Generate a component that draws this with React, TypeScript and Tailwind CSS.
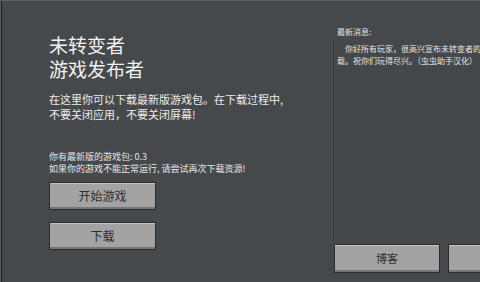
const font = { fontFamily: '"Noto Sans CJK SC", "Noto Sans", sans-serif' };

const GameButton = ({ label, className = "" }: { label: string; className?: string }) => (
  <button
    className={`flex items-center justify-center shrink-0 border border-[#2a2d2f] bg-[#a3a3a3] text-[#2e2e2e] shadow-[inset_0_1px_0_#c4c4c4,inset_0_-2px_0_#777] ${className}`}
  >
    {label}
  </button>
);

const App = () => {
  return (
    <div
      className="relative flex w-[480px] h-[282px] overflow-hidden bg-[#46494b] border-t border-[#5c6062]"
      style={font}
    >
      {/* dark left edge */}
      <div className="w-[1px] bg-[#5a5d5f] shrink-0" />
      <div className="w-[1px] bg-[#1c1e1f] shrink-0" />

      {/* Left column */}
      <div className="flex flex-col w-[331px] shrink-0 pl-[47px] pt-[32px]">
        <h1 className="text-[19px] leading-[24px] text-[#f2f2f2] font-normal">
          未转变者
          <br />
          游戏发布者
        </h1>
        <p className="mt-[11px] text-[11px] leading-[15px] text-[#ececec] whitespace-nowrap">
          在这里你可以下载最新版游戏包。在下载过程中,
          <br />
          不要关闭应用，不要关闭屏幕!
        </p>
        <p className="mt-[29px] text-[9px] leading-[12px] text-[#e6e6e6] whitespace-nowrap">
          你有最新版的游戏包: 0.3
          <br />
          如果你的游戏不能正常运行, 请尝试再次下载资源!
        </p>
        <div className="mt-[7px] flex flex-col gap-[12px]">
          <GameButton label="开始游戏" className="w-[107px] h-[28px] text-[12px]" />
          <GameButton label="下载" className="w-[107px] h-[28px] text-[12px]" />
        </div>
      </div>

      {/* Right column */}
      <div className="flex flex-col flex-1 pt-[25px]">
        <p className="pl-[4px] text-[8px] leading-[11px] text-[#e2e2e2]">最新消息:</p>
        <div className="mt-[3px] h-[202px] w-[200px] border-l border-[#383b3d] bg-[#45484a] pl-[3px] pt-[3px]">
          <p className="text-[8px] leading-[12px] text-[#e6e6e6] whitespace-nowrap">
            <span className="pl-[8px]">你好所有玩家，很高兴宣布未转变者的发</span>
            <br />
            载。祝你们玩得尽兴。（虫虫助手汉化）
          </p>
        </div>
        <div className="mt-[2px] flex gap-[8px] pl-[1px]">
          <GameButton label="博客" className="w-[106px] h-[29px] text-[11px]" />
          <GameButton label="" className="w-[106px] h-[29px] text-[11px]" />
        </div>
      </div>
    </div>
  );
};

export default App;
